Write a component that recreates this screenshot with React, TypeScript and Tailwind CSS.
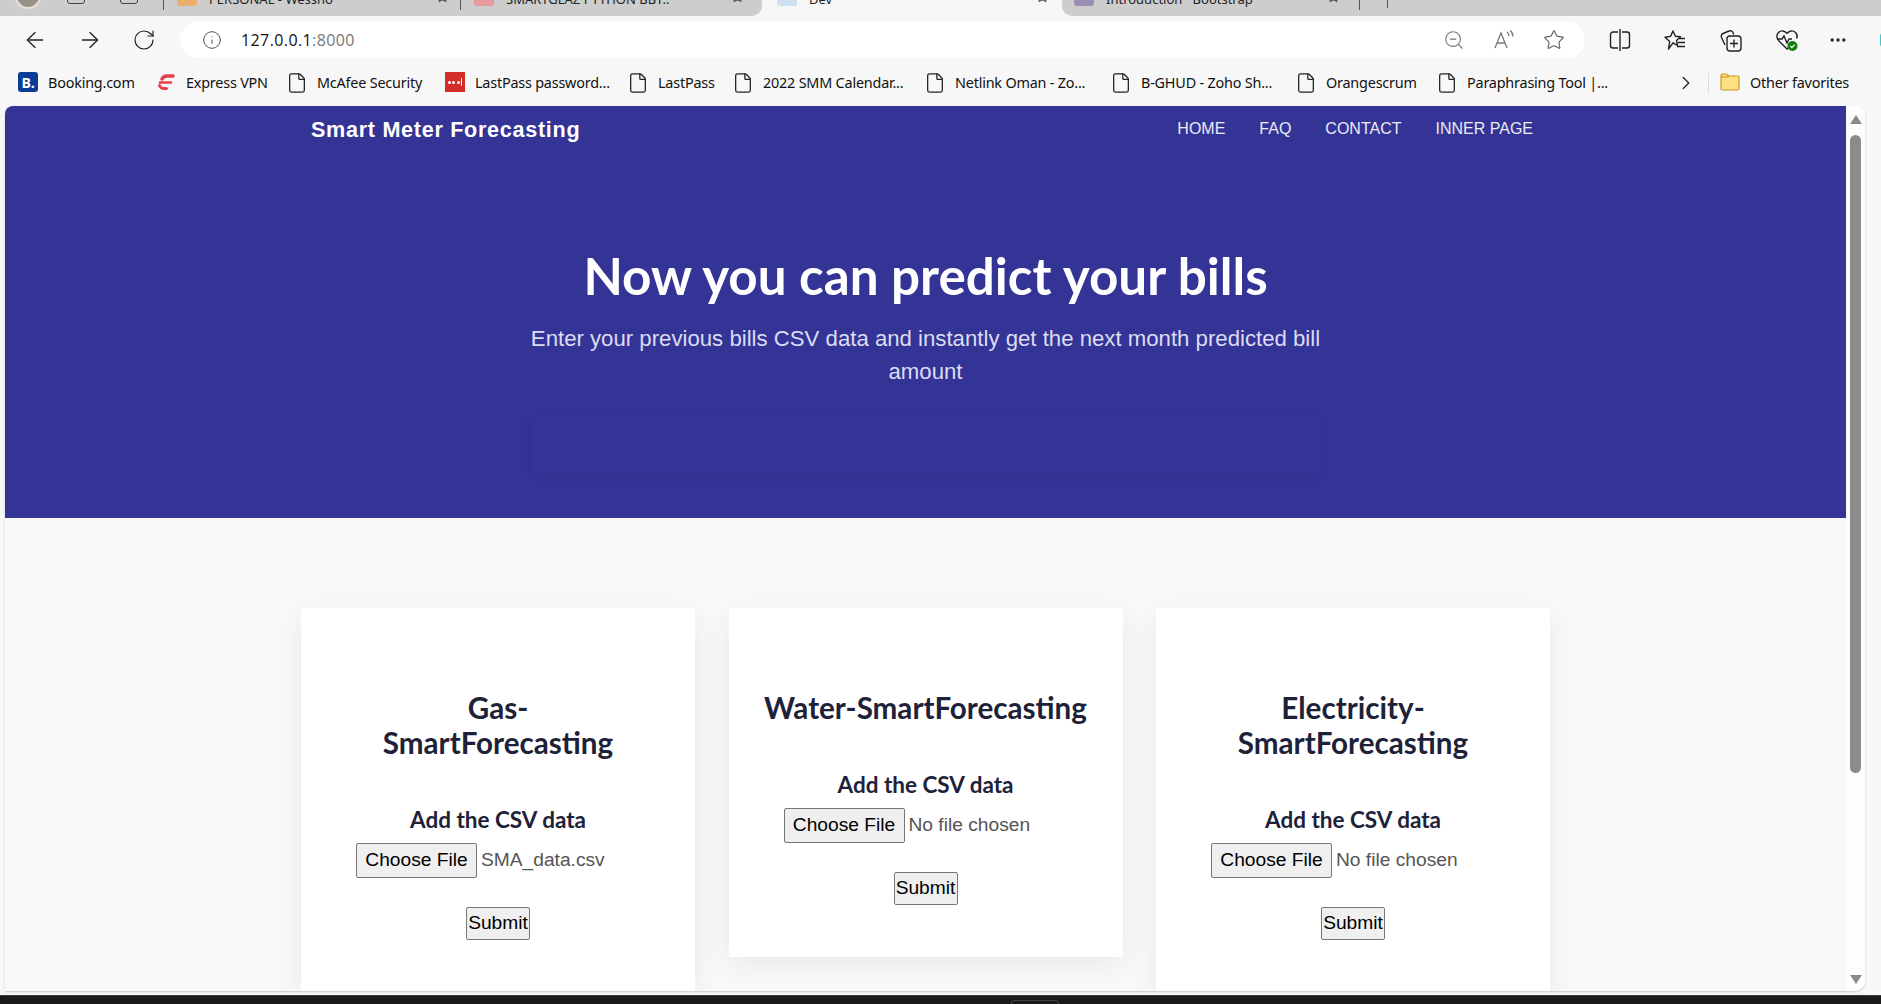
import React from 'react';
import { ArrowLeft, ArrowRight, RotateCw, Info, ZoomOut, Star, ChevronRight, File, MoreHorizontal } from 'lucide-react';

const bookmarks = [
    { label: 'Booking.com', icon: 'booking', width: 'w-[138px]' },
    { label: 'Express VPN', icon: 'vpn', width: 'w-[133px]' },
    { label: 'McAfee Security', icon: 'file', width: 'w-[156px]' },
    { label: 'LastPass password...', icon: 'lastpass', width: 'w-[185px]' },
    { label: 'LastPass', icon: 'file', width: 'w-[105px]' },
    { label: '2022 SMM Calendar...', icon: 'file', width: 'w-[192px]' },
    { label: 'Netlink Oman - Zo...', icon: 'file', width: 'w-[186px]' },
    { label: 'B-GHUD - Zoho Sh...', icon: 'file', width: 'w-[185px]' },
    { label: 'Orangescrum', icon: 'file', width: 'w-[141px]' },
    { label: 'Paraphrasing Tool |...', icon: 'file', width: 'w-[244px]' },
];

const BookmarkIcon = ({ icon }: { icon: string }) => {
    if (icon === 'booking') {
        return (
            <div className="w-5 h-5 rounded-[3px] bg-[#0b3d96] text-white text-[14px] font-bold flex items-center justify-center font-['Open_Sans',sans-serif]">
                B.
            </div>
        );
    }
    if (icon === 'vpn') {
        return (
            <svg width="20" height="20" viewBox="0 0 20 20" fill="none" stroke="#e5404c" strokeLinecap="round">
                <path d="M6 7c1-2 3-3 5-3h6" strokeWidth="3.500" />
                <path d="M4 10.500h11" strokeWidth="2.500" />
                <path d="M3.500 13.500c.5 2 2.500 3 5 3h2" strokeWidth="3" />
            </svg>
        );
    }
    if (icon === 'lastpass') {
        return (
            <div className="w-5 h-5 bg-[#d32d27] flex items-center justify-center gap-[1.500px]">
                <span className="w-[3px] h-[3px] rounded-full bg-white" />
                <span className="w-[3px] h-[3px] rounded-full bg-white" />
                <span className="w-[3px] h-[3px] rounded-full bg-white" />
                <span className="w-px h-[8px] bg-white" />
            </div>
        );
    }
    return <File size={22} strokeWidth={1.4} className="text-[#222] -ml-[3px] -mr-[1px]" />;
};

const ReadAloudIcon = () => (
    <svg width="22" height="22" viewBox="0 0 22 22" fill="none" stroke="#777" strokeWidth="1.300">
        <path d="M2 19 8 4l6 15M4.500 14h7" />
        <path d="M14 3c1.500 1 2 2.500 2 4M17 1.500c2 1.500 3 3.500 3 6" />
    </svg>
);

const SplitIcon = () => (
    <svg width="22" height="24" viewBox="0 0 22 24" fill="none" stroke="#222" strokeWidth="1.400">
        <path d="M9 4H4a2.500 2.500 0 0 0-2.500 2.500v11A2.500 2.500 0 0 0 4 20h5M13 4h5a2.500 2.500 0 0 1 2.500 2.500v11A2.500 2.500 0 0 1 18 20h-5M11 1v22" />
    </svg>
);

const FavoritesIcon = () => (
    <svg width="24" height="24" viewBox="0 0 24 24" fill="none" stroke="#222" strokeWidth="1.400">
        <path d="M10 3l2.300 5.300 5.200.5-4 3.700 1 5-4.500-2.700L5.500 21l1.200-7.500L2 9.200l5.500-.8z" strokeLinejoin="round" />
        <path d="M16 10.500h6M15 14.500h7M14 18.500h8" />
    </svg>
);

const CollectionsIcon = () => (
    <svg width="24" height="24" viewBox="0 0 24 24" fill="none" stroke="#222" strokeWidth="1.400">
        <path d="M6 17 2.500 9.500A3 3 0 0 1 4 5.500l6-2.500a3 3 0 0 1 4 1.500l.8 2" />
        <rect x="8" y="8" width="14" height="15" rx="3" />
        <path d="M15 11.500v8M11 15.500h8" />
    </svg>
);

const HeartIcon = () => (
    <svg width="24" height="24" viewBox="0 0 24 24" fill="none">
        <path d="M12 5.500C10 2.500 6 2 3.500 4.500 1 7 1.500 10.500 4 13l8 8 2-2" stroke="#222" strokeWidth="1.400" />
        <path d="M12 5.500c2-3 6-3.500 8.500-1 1.800 1.800 2 4 1.300 6" stroke="#222" strokeWidth="1.400" />
        <path d="M2 11h5l2-3 3 7 2-4h3" stroke="#222" strokeWidth="1.400" />
        <circle cx="17.500" cy="18" r="5" fill="#107c10" />
        <path d="M15.300 18l1.600 1.600 2.800-3" stroke="white" strokeWidth="1.300" />
    </svg>
);

const FolderIcon = () => (
    <svg width="20" height="18" viewBox="0 0 20 18">
        <path d="M1 4V2.500A1.500 1.500 0 0 1 2.500 1h4L9 3h8.500A1.500 1.500 0 0 1 19 4.500v11a1.500 1.500 0 0 1-1.500 1.500h-15A1.500 1.500 0 0 1 1 15.500z" fill="#ffdf84" stroke="#c79a20" strokeWidth="1.200" />
        <path d="M1 4h6l2-1" fill="none" stroke="#c79a20" strokeWidth="1.200" />
    </svg>
);

const Tab = ({ color, label, width }: { color: string; label: string; width: string }) => (
    <div className={`flex items-center h-full ${width}`}>
        <span className={`w-5 h-5 rounded-[3px] shrink-0 ${color}`} />
        <span className="ml-3 mt-[7px] flex-1 truncate text-[13px] text-[#222]">{label}</span>
        <Star size={13} className="text-[#444] shrink-0" />
    </div>
);

const ForecastCard = ({ title, fileName }: { title: React.ReactNode; fileName: string }) => (
    <div className="w-[394px] shrink-0 bg-white shadow-[0_8px_30px_rgba(0,0,0,0.07)] pt-[82px] pb-[52px] flex flex-col items-center">
        <h3 className="font-['Lato',sans-serif] font-bold text-[29.6px] leading-[35px] text-[#1d2238] text-center px-[30px]">
            {title}
        </h3>
        <h4 className="mt-[46px] font-['Lato',sans-serif] font-bold text-[22.5px] leading-[28px] text-[#1d2238]">
            Add the CSV data
        </h4>
        <div className="mt-[9px] w-[284px] flex items-center font-['Liberation_Sans',sans-serif] text-[19.2px]">
            <button className="w-[121px] h-[35px] shrink-0 bg-[#efefef] border border-[#767676] rounded-[2px] text-black">
                Choose File
            </button>
            <span className="ml-[4px] text-[#555]">{fileName}</span>
        </div>
        <button className="mt-[29px] w-[64px] h-[33px] bg-[#efefef] border border-[#767676] rounded-[2px] text-black font-['Liberation_Sans',sans-serif] text-[19.2px]">
            Submit
        </button>
    </div>
);

export default function App() {
    return (
        <div className="w-[1881px] h-[1004px] overflow-hidden flex flex-col bg-[#f7f7f7] font-['Noto_Sans',sans-serif]">
            {/* tab strip, cut off by the top of the capture */}
            <div className="h-4 flex shrink-0 overflow-hidden">
                <div className="w-[762px] bg-[#cdcdcd] rounded-br-[10px] flex items-center pl-[15px] h-full">
                    <div className="flex items-center h-[28px] -mt-[24px] shrink-0">
                        <span className="w-[26px] h-[26px] rounded-full bg-[#9a9287] border-2 border-[#e6e2dc]" />
                        <span className="ml-[26px] w-[18px] h-[16px] border border-[#444] rounded-[3px]" />
                        <span className="ml-[35px] w-[18px] h-[16px] border border-[#444] rounded-[3px]" />
                        <span className="ml-[25px] w-px h-[28px] bg-[#555]" />
                        <div className="ml-[13px]">
                            <Tab color="bg-[#e8b06a]" label="PERSONAL - Wessno" width="w-[272px]" />
                        </div>
                        <span className="ml-[11px] w-px h-[28px] bg-[#555]" />
                        <div className="ml-[13px]">
                            <Tab color="bg-[#e79a9a]" label="SMARTGLAZ PYTHON BBT.." width="w-[270px]" />
                        </div>
                    </div>
                </div>
                <div className="w-[300px] flex items-center pl-[15px] h-full">
                    <div className="-mt-[24px] h-[28px]">
                        <Tab color="bg-[#cfe0f2]" label="Dev" width="w-[272px]" />
                    </div>
                </div>
                <div className="flex-1 bg-[#cdcdcd] rounded-bl-[10px] flex items-center pl-[12px] h-full">
                    <div className="flex items-center -mt-[24px] h-[28px]">
                        <Tab color="bg-[#9b8fb0]" label="Introduction · Bootstrap" width="w-[266px]" />
                        <span className="ml-[19px] w-px h-[28px] bg-[#555]" />
                        <span className="ml-[27px] w-px h-[24px] bg-[#555]" />
                    </div>
                </div>
            </div>

            {/* toolbar */}
            <div className="h-[42px] shrink-0 flex items-center pt-[5px]">
                <div className="w-[180px] flex items-center pl-[22px] gap-[29px] text-[#222] shrink-0">
                    <ArrowLeft size={26} strokeWidth={1.200} />
                    <ArrowRight size={26} strokeWidth={1.200} />
                    <RotateCw size={24} strokeWidth={1.200} />
                </div>
                <div className="w-[1405px] h-[37px] shrink-0 bg-white rounded-full flex items-center pl-[22px] pr-[20px]">
                    <Info size={20} strokeWidth={1.200} className="text-[#555]" />
                    <span className="ml-[19px] text-[16px] tracking-[0.4px] text-[#111] font-['Open_Sans',sans-serif]">
                        127.0.0.1<span className="text-[#777]">:8000</span>
                    </span>
                    <div className="ml-auto flex items-center gap-[28px]">
                        <ZoomOut size={22} strokeWidth={1.200} className="text-[#777]" />
                        <ReadAloudIcon />
                        <Star size={22} strokeWidth={1.300} className="text-[#666]" />
                    </div>
                </div>
                <div className="flex-1 flex items-center pl-[24px] gap-[32px]">
                    <SplitIcon />
                    <FavoritesIcon />
                    <CollectionsIcon />
                    <HeartIcon />
                    <MoreHorizontal size={20} className="text-[#222] -ml-[3px]" />
                    <span className="ml-auto w-[3px] h-[14px] bg-[#3bc9c9] rounded-l-full" />
                </div>
            </div>

            {/* favorites bar */}
            <div className="h-[48px] shrink-0 flex items-center pl-[18px] pt-[1px] text-[14.4px] tracking-[-0.2px] text-[#111]">
                {bookmarks.map((b) => (
                    <div key={b.label} className={`flex items-center gap-[10px] shrink-0 ${b.width}`}>
                        <BookmarkIcon icon={b.icon} />
                        <span className="whitespace-nowrap">{b.label}</span>
                    </div>
                ))}
                <ChevronRight size={22} strokeWidth={1.400} className="text-[#222] shrink-0 -ml-[8px]" />
                <span className="ml-[11px] w-px h-[20px] bg-[#ddd] shrink-0" />
                <div className="ml-[11px] flex items-center gap-[10px] shrink-0">
                    <FolderIcon />
                    <span className="whitespace-nowrap">Other favorites</span>
                </div>
            </div>

            {/* browser content */}
            <div className="flex-1 min-h-0 flex pl-[5px] pb-[4px]">
                <div className="flex-1 min-w-0 flex overflow-hidden rounded-t-[8px] rounded-br-[10px] bg-white shadow-[0_1px_2px_rgba(0,0,0,0.2)] mr-[16px]">
                    <div className="w-[1841px] shrink-0 bg-[#f9f9f9] flex flex-col">
                        <div className="h-[412px] shrink-0 bg-[#343396] flex flex-col items-center">
                            <nav className="w-full h-[46px] flex items-center justify-between pl-[306px] pr-[313px] pt-[2px] font-['Liberation_Sans',sans-serif] text-white">
                                <span className="font-bold text-[21.6px] tracking-[0.7px]">Smart Meter Forecasting</span>
                                <div className="flex items-center gap-[34px] text-[16px] text-white/90 -mt-[2px]">
                                    <span>HOME</span>
                                    <span>FAQ</span>
                                    <span>CONTACT</span>
                                    <span>INNER PAGE</span>
                                </div>
                            </nav>
                            <h1 className="mt-[90px] font-['Lato',sans-serif] font-bold text-[51.2px] leading-[66px] text-white">
                                Now you can predict your bills
                            </h1>
                            <p className="mt-[14px] w-[800px] text-center font-['Liberation_Sans',sans-serif] text-[22.2px] leading-[33px] text-[#dcdcf2]">
                                Enter your previous bills CSV data and instantly get the next month predicted bill amount
                            </p>
                            <div className="mt-[26px] w-[790px] h-[58px] shadow-[0_4px_12px_rgba(0,0,0,0.03)] rounded-[4px]" />
                        </div>
                        <div className="flex items-start gap-[33.500px] pl-[296px] pt-[90px]">
                            <ForecastCard title={<>Gas-<br />SmartForecasting</>} fileName="SMA_data.csv" />
                            <ForecastCard title="Water-SmartForecasting" fileName="No file chosen" />
                            <ForecastCard title={<>Electricity-<br />SmartForecasting</>} fileName="No file chosen" />
                        </div>
                    </div>
                    {/* scrollbar */}
                    <div className="flex-1 bg-[#fdfdfd] flex flex-col items-center pt-[9px] pb-[7px]">
                        <span className="w-0 h-0 border-x-[6px] border-x-transparent border-b-[9px] border-b-[#8a8a8a]" />
                        <div className="mt-[11px] w-[11px] h-[638px] bg-[#8b8b8b] rounded-full" />
                        <span className="mt-auto w-0 h-0 border-x-[6px] border-x-transparent border-t-[9px] border-t-[#8a8a8a]" />
                    </div>
                </div>
            </div>

            {/* taskbar edge */}
            <div className="h-[9px] shrink-0 bg-[#1a1a1a] border-t border-[#3a3a3a] flex justify-center">
                <span className="mt-[4px] ml-[188px] w-[48px] h-[5px] border border-b-0 border-[#444] rounded-t-[4px]" />
            </div>
        </div>
    );
}
